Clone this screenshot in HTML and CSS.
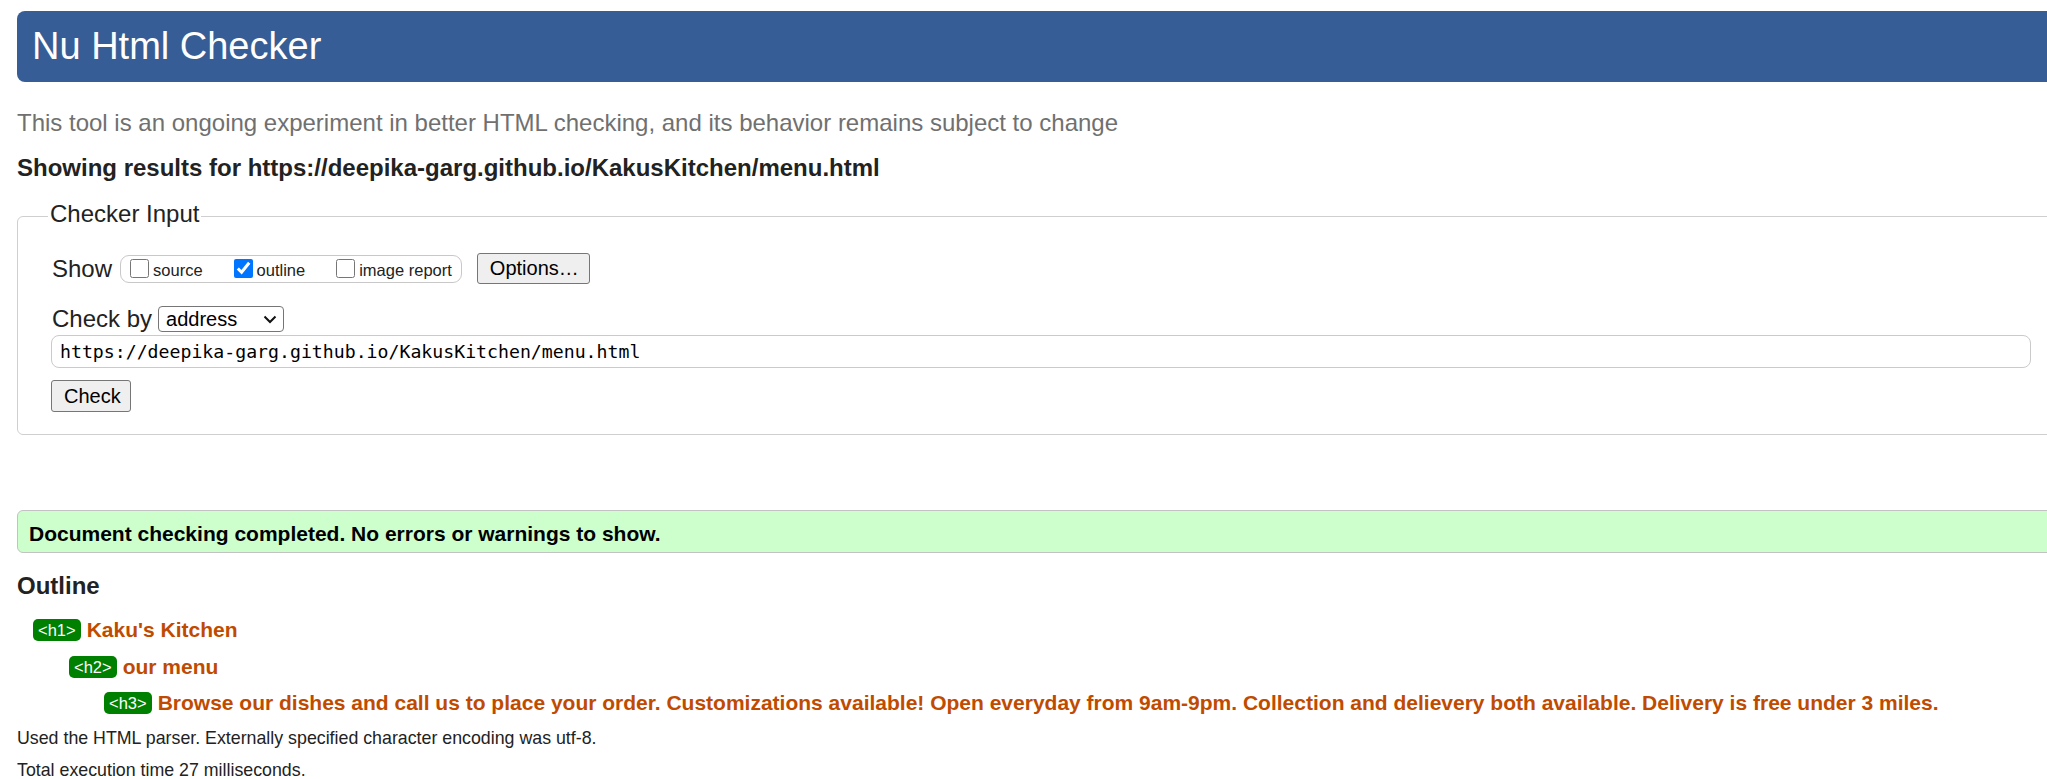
FILE: index.html
```html
<!DOCTYPE html>
<html lang="en">
<head>
<meta charset="utf-8">
<title>Showing results for https://deepika-garg.github.io/KakusKitchen/menu.html - Nu Html Checker</title>
<link rel="stylesheet" href="styles.css">
</head>
<body>
<div class="page">
  <header class="masthead"><h1>Nu Html Checker</h1></header>
  <p class="tagline">This tool is an ongoing experiment in better HTML checking, and its behavior remains subject to change</p>
  <p class="results-for">Showing results for https://deepika-garg.github.io/KakusKitchen/menu.html</p>

  <form class="checker-form">
    <fieldset class="input-box">
      <legend>Checker Input</legend>
      <div class="show-row">
        <span class="lbl">Show</span>
        <div class="opts">
          <label class="opt"><input type="checkbox">source</label>
          <label class="opt"><input type="checkbox" checked>outline</label>
          <label class="opt"><input type="checkbox">image report</label>
        </div>
        <button type="button" class="btn btn-options">Options…</button>
      </div>
      <div class="by-row">
        <label class="lbl" for="docselect">Check by</label>
        <span class="select-wrap">
          <select id="docselect"><option>address</option><option>file upload</option><option>text input</option></select>
          <svg class="chev" width="14" height="9" viewBox="0 0 14 9"><path d="M1.5 1.5 L7 7 L12.5 1.5" fill="none" stroke="#111" stroke-width="2"/></svg>
        </span>
      </div>
      <input class="url" type="url" value="https://deepika-garg.github.io/KakusKitchen/menu.html">
      <div class="submit-row"><button type="submit" class="btn btn-check">Check</button></div>
    </fieldset>
  </form>

  <div class="success"><p>Document checking completed. No errors or warnings to show.</p></div>

  <h2 class="outline-title">Outline</h2>
  <ol class="outline">
    <li class="h-row lvl1"><span class="badge">&lt;h1&gt;</span><span class="heading">Kaku's Kitchen</span></li>
    <li class="h-row lvl2"><span class="badge">&lt;h2&gt;</span><span class="heading">our menu</span></li>
    <li class="h-row lvl3"><span class="badge">&lt;h3&gt;</span><span class="heading">Browse our dishes and call us to place your order. Customizations available! Open everyday from 9am-9pm. Collection and delievery both available. Delivery is free under 3 miles.</span></li>
  </ol>
  <p class="stats">Used the HTML parser. Externally specified character encoding was utf-8.</p>
  <p class="stats">Total execution time 27 milliseconds.</p>
</div>
</body>
</html>
```

FILE: styles.css
```css
html {
  overflow: hidden;
}

body {
  margin: 0;
  background: #fff;
  color: #222;
  font-family: "Liberation Sans", Arial, sans-serif;
}

.page {
  width: 2050px;
  padding: 11px 0 0 17px;
}

.masthead h1 {
  margin: 0;
  height: 71px;
  padding-left: 15px;
  background: #365d95;
  border-radius: 8px;
  color: #fff;
  font-size: 38px;
  font-weight: normal;
  line-height: 71px;
}

.tagline {
  margin: 27px 0 0;
  color: #707070;
  font-size: 24px;
  line-height: 28px;
}

.results-for {
  margin: 17px 0 0;
  font-size: 24px;
  font-weight: bold;
  line-height: 27px;
}

.checker-form {
  margin: 19px 0 0;
}

.input-box {
  margin: 0;
  padding: 20px 34px 22px 34px;
  border: 1px solid #cfcfcf;
  border-radius: 6px;
  min-width: 0;
}

.input-box legend {
  margin-left: -4px;
  padding: 0 2px 5px;
  font-size: 24px;
  line-height: 28px;
}

.lbl {
  font-size: 24px;
  line-height: 28px;
}

.show-row {
  display: flex;
  align-items: center;
  height: 31px;
}

.opts {
  display: flex;
  align-items: center;
  gap: 31px;
  height: 28px;
  box-sizing: border-box;
  margin-left: 8px;
  padding: 0 9px 0 9px;
  border: 1px solid #c8c8c8;
  border-radius: 9px;
}

.opt {
  display: flex;
  align-items: center;
  gap: 4px;
  font-size: 16.5px;
  line-height: 20px;
  padding-top: 3px;
}

.opt input {
  width: 19px;
  height: 19px;
  margin: -4px 0 0;
}

.btn {
  box-sizing: border-box;
  background: #efefef;
  border: 1px solid #767676;
  border-radius: 3px;
  color: #000;
  font-family: "Liberation Sans", Arial, sans-serif;
  font-size: 20px;
  padding: 0 12px;
}

.btn-options {
  margin-left: 15px;
  width: 113px;
  height: 31px;
}

.by-row {
  display: flex;
  align-items: center;
  height: 26px;
  margin-top: 22px;
}

.select-wrap {
  position: relative;
  margin-left: 6px;
  display: flex;
}

.select-wrap select {
  appearance: none;
  width: 126px;
  height: 26px;
  box-sizing: border-box;
  padding: 0 0 0 7px;
  background: #fff;
  border: 1px solid #767676;
  border-radius: 4px;
  color: #000;
  font-family: "Liberation Sans", Arial, sans-serif;
  font-size: 20px;
}

.chev {
  position: absolute;
  right: 7px;
  top: 9px;
  pointer-events: none;
}

.url {
  display: block;
  box-sizing: border-box;
  width: 100%;
  height: 33px;
  margin: 3px 0 0 -1px;
  padding: 0 8px;
  background: #fff;
  border: 1px solid #cacaca;
  border-radius: 8px;
  color: #000;
  font-family: "DejaVu Sans Mono", "Liberation Mono", monospace;
  font-size: 18.2px;
}

.submit-row {
  margin-top: 12px;
  margin-left: -1px;
}

.btn-check {
  width: 80px;
  height: 32px;
}

.success {
  margin-top: 75px;
  height: 43px;
  box-sizing: border-box;
  background: #ccffcc;
  border: 1px solid #c2c2c2;
  border-radius: 6px;
  padding: 4px 11px 0;
}

.success p {
  margin: 0;
  color: #000;
  font-size: 21px;
  font-weight: bold;
  line-height: 37px;
}

.outline-title {
  margin: 19px 0 0;
  font-size: 24px;
  line-height: 28px;
}

.outline {
  list-style: none;
  margin: 12px 0 0;
  padding: 0;
}

.h-row {
  display: flex;
  align-items: center;
  height: 36.5px;
}

.lvl1 { padding-left: 16px; }
.lvl2 { padding-left: 52px; }
.lvl3 { padding-left: 87px; }

.badge {
  background: #008000;
  color: #fff;
  font-size: 16.5px;
  line-height: 22px;
  padding: 0 5px;
  border-radius: 5px;
}

.heading {
  margin-left: 6px;
  color: #c04b00;
  font-size: 21px;
  font-weight: bold;
}

.stats {
  margin: 0;
  color: #222;
  font-size: 17.8px;
  line-height: 32px;
}
```
